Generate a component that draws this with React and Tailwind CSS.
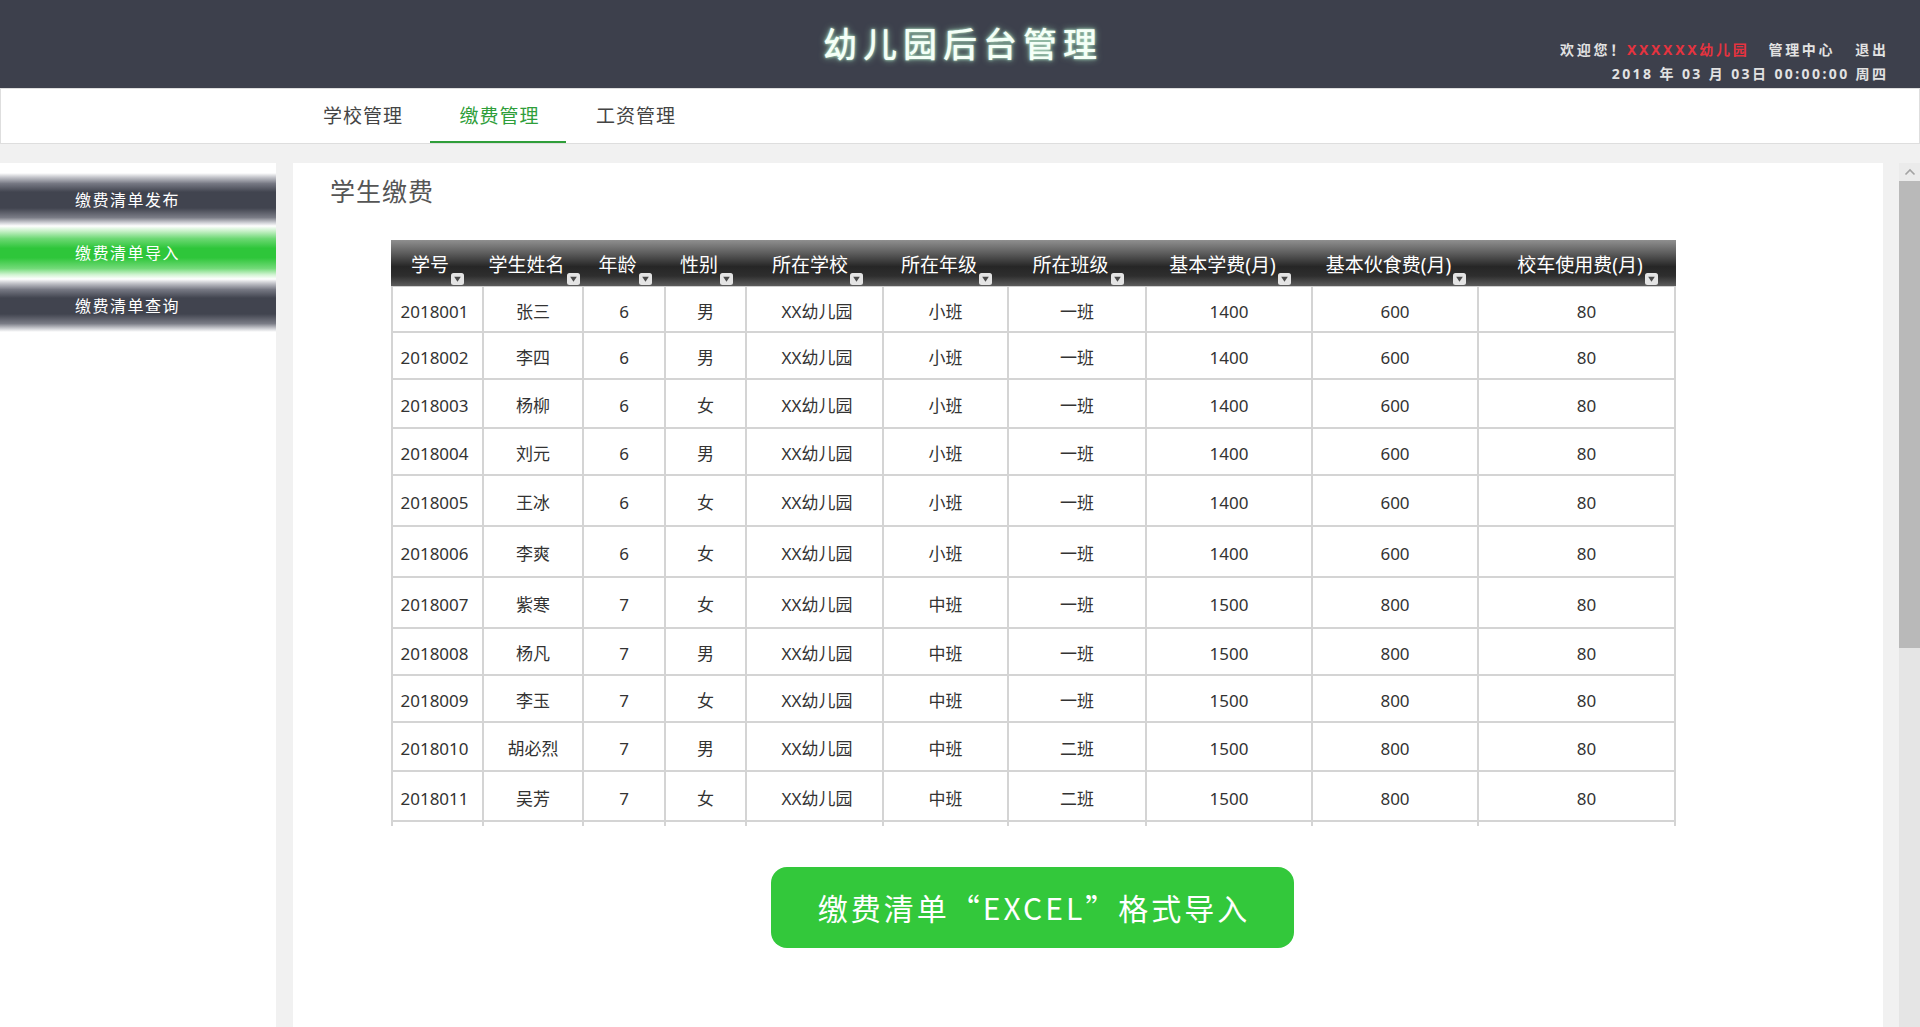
import React from "react";

const heads = ["学号", "学生姓名", "年龄", "性别", "所在学校", "所在年级", "所在班级", "基本学费(月)", "基本伙食费(月)", "校车使用费(月)"];
const rows = [
  ["2018001", "张三", "6", "男", "XX幼儿园", "小班", "一班", "1400", "600", "80"],
  ["2018002", "李四", "6", "男", "XX幼儿园", "小班", "一班", "1400", "600", "80"],
  ["2018003", "杨柳", "6", "女", "XX幼儿园", "小班", "一班", "1400", "600", "80"],
  ["2018004", "刘元", "6", "男", "XX幼儿园", "小班", "一班", "1400", "600", "80"],
  ["2018005", "王冰", "6", "女", "XX幼儿园", "小班", "一班", "1400", "600", "80"],
  ["2018006", "李爽", "6", "女", "XX幼儿园", "小班", "一班", "1400", "600", "80"],
  ["2018007", "紫寒", "7", "女", "XX幼儿园", "中班", "一班", "1500", "800", "80"],
  ["2018008", "杨凡", "7", "男", "XX幼儿园", "中班", "一班", "1500", "800", "80"],
  ["2018009", "李玉", "7", "女", "XX幼儿园", "中班", "一班", "1500", "800", "80"],
  ["2018010", "胡必烈", "7", "男", "XX幼儿园", "中班", "二班", "1500", "800", "80"],
  ["2018011", "吴芳", "7", "女", "XX幼儿园", "中班", "二班", "1500", "800", "80"],
  ["", "", "", "", "", "", "", "", "", ""],
];
const heights = [46, 47, 49, 47, 51, 51, 51, 47, 47, 49, 50, 48];

function DropIcon() {
  return (
    <svg width="13" height="12" viewBox="0 0 13 12" className="shrink-0 ml-[2px] mb-[-8px]">
      <rect x="0" y="0" width="13" height="12" rx="2.5" fill="#e4e4e4" />
      <path d="M3.2 3.8 L9.8 3.8 L6.5 8.8 Z" fill="#4a4a4a" />
    </svg>
  );
}

export default function App() {
  return (
    <div className="w-[1920px] h-[1027px] overflow-hidden bg-[#f1f1f1] font-['Noto_Sans','Noto_Sans_CJK_SC',sans-serif] flex flex-col">
      {/* Header */}
      <div className="h-[88px] shrink-0 bg-[#3d404c] grid grid-cols-[1fr_auto_1fr]">
        <div />
        <div className="self-center text-[34px] leading-[40px] tracking-[6px] pl-[6px] text-[#f4fff7] font-medium [text-shadow:0_0_3px_#bff0cf,0_0_7px_rgba(170,240,200,0.7)]">
          幼儿园后台管理
        </div>
        <div className="flex flex-col items-end justify-end pb-[2px] pr-[34px] text-[14px] leading-[24px] font-bold text-[#e2e2e2]">
          <div className="flex tracking-[2.7px] mr-[-2.7px]">
            <span>欢迎您！</span>
            <span className="text-[#e5333f]">XXXXXX幼儿园</span>
            <span className="ml-[19px]">管理中心</span>
            <span className="ml-[20px]">退出</span>
          </div>
          <div className="tracking-[2.4px] mr-[-2.4px]">2018 年 03 月 03日 00:00:00 周四</div>
        </div>
      </div>

      {/* Nav */}
      <div className="h-[56px] shrink-0 bg-white border border-[#dedede] flex pl-[293px]">
        <div className="w-[136px] h-full flex items-center justify-center text-[19px] tracking-[1px] text-[#444] pl-[2px]">学校管理</div>
        <div className="w-[136px] h-full flex items-center justify-center text-[19px] tracking-[1px] text-[#2f9e3a] border-b-2 border-[#2f9e3a] pt-[2px] pl-[3px]">缴费管理</div>
        <div className="w-[136px] h-full flex items-center justify-center text-[19px] tracking-[1px] text-[#444] pl-[4px]">工资管理</div>
      </div>

      {/* Main */}
      <div className="flex-1 flex pt-[19px] min-h-0">
        {/* Sidebar */}
        <div className="w-[276px] shrink-0 bg-white pt-[10px]">
          <div className="h-[53px] flex items-center pl-[75px] text-[16px] tracking-[1.5px] text-white bg-[linear-gradient(to_bottom,#ffffff_0%,#c4c5cb_8%,#767883_20%,#41444f_36%,#41444f_66%,#7a7c86_84%,#d0d1d6_94%,#ffffff_100%)]">
            缴费清单发布
          </div>
          <div className="h-[53px] flex items-center pl-[75px] text-[16px] tracking-[1.5px] text-white bg-[linear-gradient(to_bottom,#ffffff_0%,#c5f0c6_10%,#6cd873_24%,#2ec63a_42%,#2ec63a_60%,#72da78_80%,#d2f4d3_92%,#ffffff_100%)]">
            缴费清单导入
          </div>
          <div className="h-[53px] flex items-center pl-[75px] text-[16px] tracking-[1.5px] text-white bg-[linear-gradient(to_bottom,#ffffff_0%,#c4c5cb_8%,#767883_20%,#41444f_36%,#41444f_66%,#7a7c86_84%,#d0d1d6_94%,#ffffff_100%)]">
            缴费清单查询
          </div>
        </div>

        <div className="w-[17px] shrink-0" />

        {/* Content */}
        <div className="flex-1 bg-white pt-[13px] min-w-0">
          <div className="pl-[37px] text-[25px] leading-[30px] tracking-[1px] text-[#555]">学生缴费</div>
          <div className="ml-[98px] w-[1285px] mt-[34px]">
            <div className="h-[586px] overflow-hidden">
              {/* header */}
              <div className="grid grid-cols-[93px_100px_82px_81px_137px_125px_138px_166px_166px_197px] h-[47px] bg-[linear-gradient(to_bottom,#8f8f8f_0%,#5e5e5e_28%,#262626_58%,#2e2e2e_78%,#5c5c5c_100%)] border-b border-[#cfcfcf]">
                {heads.map((h, i) => (
                  <div
                    key={i}
                    className={
                      "flex items-center justify-center text-white text-[19px] leading-[24px] pt-[3px]" +
                      (i === 9 ? " pl-[20px]" : i === 4 ? " pl-[4px]" : "")
                    }
                  >
                    <div className="flex items-end">
                      <span>{h}</span>
                      <DropIcon />
                    </div>
                  </div>
                ))}
              </div>
              {rows.map((r, ri) => (
                <div
                  key={ri}
                  className="grid grid-cols-[93px_100px_82px_81px_137px_125px_138px_166px_166px_197px]"
                  style={{ height: heights[ri] }}
                >
                  {r.map((c, ci) => (
                    <div
                      key={ci}
                      className={
                        "flex items-center justify-center text-[17px] text-[#333] border-b-2 border-r-2 border-[#d4d4d4] pt-[5px]" +
                        (ci === 0 ? " border-l-2 pr-[6px]" : "") +
                        (ci === 9 ? " pl-[20px]" : "") +
                        (ci === 4 ? " pl-[5px]" : "")
                      }
                    >
                      {c}
                    </div>
                  ))}
                </div>
              ))}
            </div>
            <div className="flex justify-center mt-[41px] pr-[2px]">
              <button className="w-[523px] h-[81px] rounded-[16px] bg-[#33c83b] text-white text-[30px] tracking-[3px] flex items-center justify-center pl-[3px] font-['Noto_Sans_CJK_SC',sans-serif]">
                缴费清单“EXCEL”格式导入
              </button>
            </div>
          </div>
        </div>

        <div className="w-[16px] shrink-0" />

        {/* Scrollbar */}
        <div className="w-[21px] shrink-0 flex flex-col bg-[#e6e6e6]">
          <div className="h-[18px] bg-[#ebebeb] flex items-center justify-center">
            <svg width="12" height="8" viewBox="0 0 12 8">
              <path d="M1.5 6.5 L6 2 L10.5 6.5" fill="none" stroke="#a3a3a3" strokeWidth="1.6" />
            </svg>
          </div>
          <div className="h-[467px] bg-[#b9b9b9]" />
          <div className="flex-1 bg-[#e5e5e5]" />
        </div>
      </div>
    </div>
  );
}
